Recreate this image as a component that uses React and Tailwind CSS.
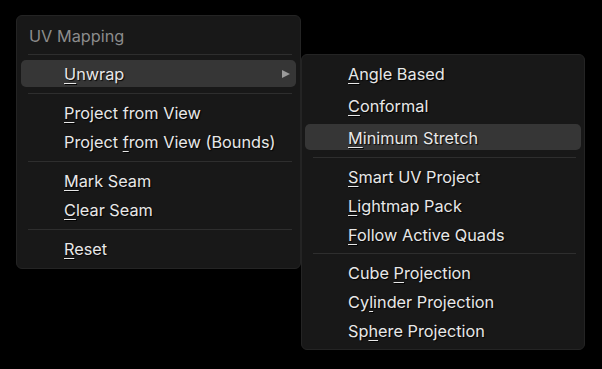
import React from 'react'

// Blender-style UV Mapping menu with the Unwrap submenu open

function Label({ text, key_ }) {
  // key_ is the index of the mnemonic letter
  if (key_ == null) return <span>{text}</span>
  return (
    <span>
      {text.slice(0, key_)}
      <span className="underline decoration-1 underline-offset-[3px]">{text[key_]}</span>
      {text.slice(key_ + 1)}
    </span>
  )
}

function Item({ text, k, active, arrow, tall, indent = 'pl-[43px]' }) {
  return (
    <div className={`${tall ? 'h-[32px] py-[3px]' : 'h-[29px] py-px'} flex flex-col`}>
      <div
        className={`flex-1 flex items-center rounded-[5px] ${indent} pr-[6px] ${
          active ? 'bg-[#363636]' : ''
        }`}
      >
        <span className="flex-1 pt-[2px] text-[#e8e8e8] [text-shadow:1px_1px_1px_rgba(0,0,0,0.9)]">
          <Label text={text} key_={k} />
        </span>
        {arrow && (
          <svg width="10" height="10" viewBox="0 0 10 10" className="mr-[-1px]">
            <path d="M1 1 L9 5 L1 9 Z" fill="#9a9a9a" />
          </svg>
        )}
      </div>
    </div>
  )
}

function Sep({ h = 'h-[10px]', inset = 'ml-[7px] mr-[4px]' }) {
  return (
    <div className={`${h} flex items-center`}>
      <div className={`flex-1 h-px bg-[#2e2e2e] ${inset}`} />
    </div>
  )
}

export default function App() {
  return (
    <div
      className="w-[602px] h-[369px] bg-black flex items-start"
      style={{ fontFamily: 'Inter, "Noto Sans", sans-serif' }}
    >
      <div className="text-[16.3px] flex items-start">
        {/* main menu */}
        <div className="mt-[15px] ml-[16px] w-[285px] h-[254px] bg-[#181818] border border-[#242424] rounded-[6px] px-[4px] pt-[4px]">
          <div className="h-[29px] flex items-center pt-[3px] pl-[8px] text-[#8c8c8c]">UV Mapping</div>
          <Sep />
          <Item text="Unwrap" k={0} active arrow />
          <Sep />
          <Item text="Project from View" k={0} />
          <Item text="Project from View (Bounds)" k={8} />
          <Sep />
          <Item text="Mark Seam" k={0} />
          <Item text="Clear Seam" k={0} />
          <Sep />
          <Item text="Reset" k={0} />
        </div>

        {/* submenu */}
        <div className="mt-[54px] w-[284px] h-[296px] bg-[#181818] border border-[#242424] rounded-[6px] px-[3px] pt-[2px]">
          <Item text="Angle Based" k={0} tall />
          <Item text="Conformal" k={0} tall />
          <Item text="Minimum Stretch" k={0} tall active />
          <Sep h="h-[9px]" inset="ml-[8px] mr-[5px]" />
          <Item text="Smart UV Project" k={0} />
          <Item text="Lightmap Pack" k={0} />
          <Item text="Follow Active Quads" k={0} />
          <Sep h="h-[9px]" inset="ml-[8px] mr-[5px]" />
          <Item text="Cube Projection" k={5} />
          <Item text="Cylinder Projection" k={2} />
          <Item text="Sphere Projection" k={2} />
        </div>
      </div>
    </div>
  )
}
